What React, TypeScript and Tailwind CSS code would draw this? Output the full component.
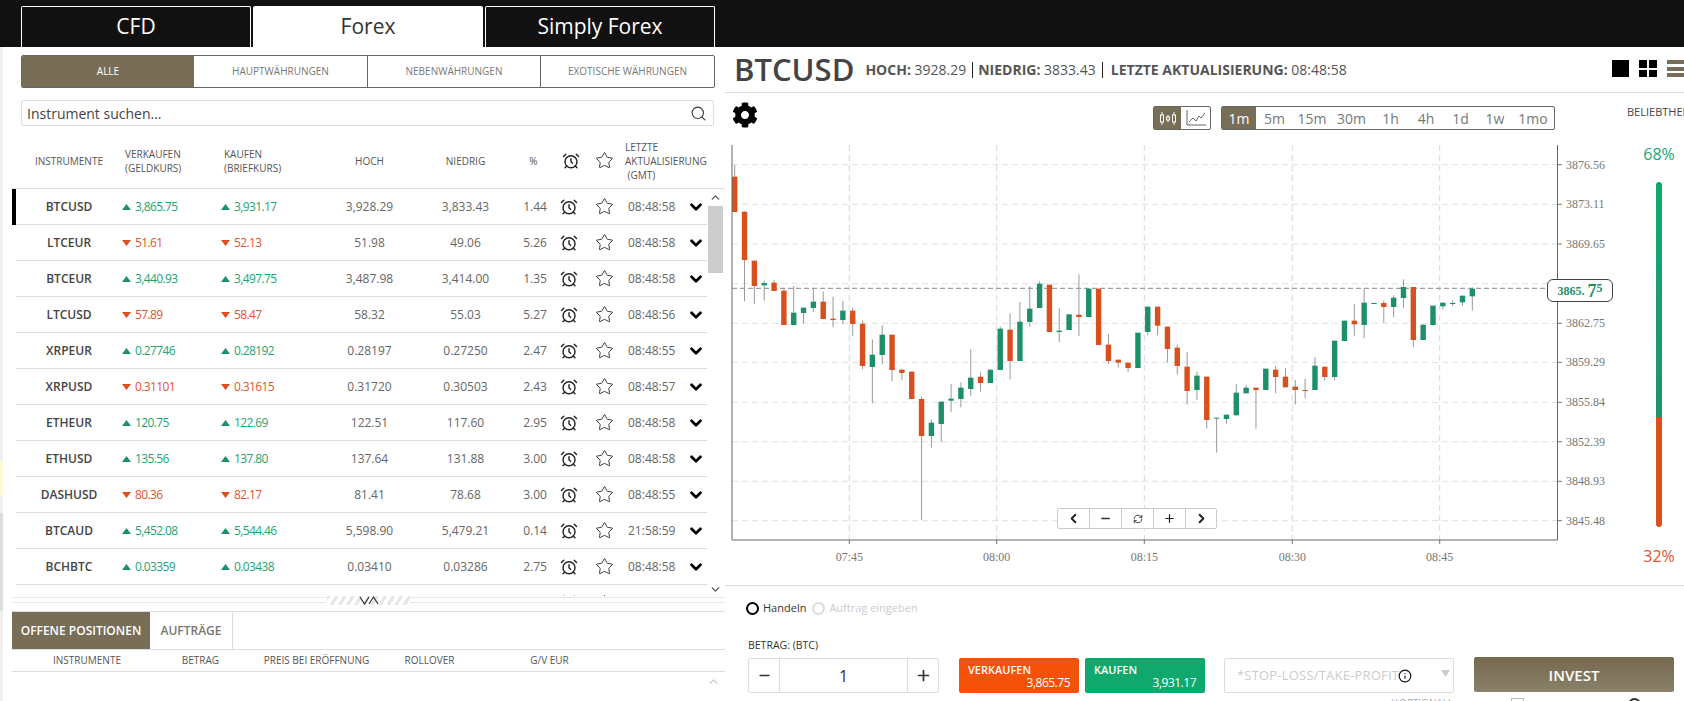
import { AlarmClock, ChevronDown, ChevronLeft, ChevronRight, ChevronUp, Info, Minus, Plus, RefreshCw, Search, Star } from "lucide-react";
import { FaCog } from "react-icons/fa";

type RowData = { sym: string; dir: "up" | "down"; sell: string; buy: string; high: string; low: string; pct: string; time: string };

const rows: RowData[] = [
  { sym: "BTCUSD", dir: "up", sell: "3,865.75", buy: "3,931.17", high: "3,928.29", low: "3,833.43", pct: "1.44", time: "08:48:58" },
  { sym: "LTCEUR", dir: "down", sell: "51.61", buy: "52.13", high: "51.98", low: "49.06", pct: "5.26", time: "08:48:58" },
  { sym: "BTCEUR", dir: "up", sell: "3,440.93", buy: "3,497.75", high: "3,487.98", low: "3,414.00", pct: "1.35", time: "08:48:58" },
  { sym: "LTCUSD", dir: "down", sell: "57.89", buy: "58.47", high: "58.32", low: "55.03", pct: "5.27", time: "08:48:56" },
  { sym: "XRPEUR", dir: "up", sell: "0.27746", buy: "0.28192", high: "0.28197", low: "0.27250", pct: "2.47", time: "08:48:55" },
  { sym: "XRPUSD", dir: "down", sell: "0.31101", buy: "0.31615", high: "0.31720", low: "0.30503", pct: "2.43", time: "08:48:57" },
  { sym: "ETHEUR", dir: "up", sell: "120.75", buy: "122.69", high: "122.51", low: "117.60", pct: "2.95", time: "08:48:58" },
  { sym: "ETHUSD", dir: "up", sell: "135.56", buy: "137.80", high: "137.64", low: "131.88", pct: "3.00", time: "08:48:58" },
  { sym: "DASHUSD", dir: "down", sell: "80.36", buy: "82.17", high: "81.41", low: "78.68", pct: "3.00", time: "08:48:55" },
  { sym: "BTCAUD", dir: "up", sell: "5,452.08", buy: "5,544.46", high: "5,598.90", low: "5,479.21", pct: "0.14", time: "21:58:59" },
  { sym: "BCHBTC", dir: "up", sell: "0.03359", buy: "0.03438", high: "0.03410", low: "0.03286", pct: "2.75", time: "08:48:58" },
];

// top, bottom, wick top, wick bottom, colour (values are 3x px from y=140)
const candles: [number, number, number, number, "r" | "g"][] = [
  [110, 216, 75, 216, "r"], [215, 360, 215, 484, "r"], [362, 438, 362, 492, "r"], [429, 436, 422, 482, "g"], [428, 453, 420, 453, "r"],
  [452, 555, 445, 555, "r"], [518, 555, 438, 555, "g"], [503, 519, 503, 550, "g"], [485, 504, 445, 515, "g"], [485, 537, 455, 537, "r"],
  [536, 540, 470, 562, "r"], [512, 540, 482, 552, "g"], [512, 552, 503, 588, "r"], [551, 678, 542, 688, "r"], [644, 681, 598, 790, "g"],
  [584, 645, 556, 672, "g"], [584, 690, 584, 724, "r"], [689, 699, 689, 720, "r"], [695, 777, 695, 777, "r"], [777, 888, 770, 1140, "r"],
  [848, 888, 838, 923, "g"], [785, 852, 785, 906, "g"], [776, 782, 732, 816, "g"], [743, 777, 727, 802, "g"], [713, 747, 628, 767, "g"],
  [710, 729, 697, 755, "r"], [689, 729, 689, 729, "g"], [566, 690, 560, 690, "g"], [569, 663, 520, 718, "r"], [545, 663, 486, 663, "g"],
  [506, 546, 438, 560, "g"], [431, 504, 424, 504, "g"], [434, 576, 434, 576, "r"], [572, 576, 504, 606, "g"], [523, 570, 523, 570, "g"],
  [524, 531, 403, 588, "r"], [446, 531, 446, 531, "g"], [446, 615, 446, 615, "r"], [614, 663, 582, 672, "r"], [659, 668, 659, 683, "r"],
  [668, 684, 668, 696, "r"], [578, 684, 578, 684, "g"], [500, 576, 500, 585, "g"], [500, 557, 500, 586, "r"], [560, 627, 560, 668, "r"],
  [623, 678, 614, 703, "r"], [680, 753, 636, 793, "r"], [707, 750, 695, 780, "g"], [710, 840, 710, 866, "r"], [833, 836, 833, 938, "g"],
  [824, 837, 824, 851, "g"], [758, 826, 732, 826, "g"], [743, 760, 735, 760, "g"], [743, 750, 743, 866, "r"], [686, 750, 686, 750, "g"],
  [689, 711, 678, 760, "r"], [710, 742, 685, 742, "r"], [740, 750, 720, 793, "r"], [750, 753, 717, 775, "r"], [677, 750, 652, 750, "g"],
  [680, 711, 680, 722, "r"], [602, 711, 602, 722, "g"], [542, 603, 542, 603, "g"], [542, 553, 492, 587, "r"], [488, 555, 445, 595, "g"],
  [489, 492, 489, 492, "g"], [489, 501, 482, 548, "r"], [473, 501, 466, 532, "g"], [441, 474, 418, 504, "g"], [441, 600, 441, 622, "r"],
  [554, 600, 554, 600, "g"], [497, 555, 497, 555, "g"], [488, 499, 488, 508, "g"], [489, 491, 482, 498, "g"], [467, 487, 467, 498, "g"],
  [446, 469, 442, 512, "g"],
];

const gridY = [164.7, 204.3, 244, 283.7, 323.3, 362.3, 402.3, 441.7, 481.3, 520.7];
const prices = ["3876.56", "3873.11", "3869.65", "", "3862.75", "3859.29", "3855.84", "3852.39", "3848.93", "3845.48"];
const gridX = [849.3, 996.7, 1144.3, 1292.3, 1439.7];
const times = ["07:45", "08:00", "08:15", "08:30", "08:45"];

const frames: [string, string][] = [
  ["1m", "w-[34px] bg-[#786e57] text-white"], ["5m", "w-[37px]"], ["15m", "w-[38px]"], ["30m", "w-[41px]"], ["1h", "w-[37px]"],
  ["4h", "w-[34px]"], ["1d", "w-[35px]"], ["1w", "w-[34px]"], ["1mo", "w-[42px]"],
];

const cols = "grid grid-cols-[106px_99px_99px_99px_93px_46px_22px_48px_44px_35px] items-center";

const Arrow = ({ dir }: { dir: string }) => (
  <svg width="9" height="6" viewBox="0 0 9 6" className="mr-[4px] shrink-0">
    {dir === "up" ? <polygon points="4.5,0 9,6 0,6" fill="#1d8f6a" /> : <polygon points="0,0 9,0 4.5,6" fill="#d9501e" />}
  </svg>
);

const Price = ({ dir, value }: { dir: string; value: string }) => (
  <div className={`flex items-center text-[12px] tracking-[-0.6px] ${dir === "up" ? "text-[#1ba672]" : "text-[#e2552a]"}`}>
    <Arrow dir={dir} />
    {value}
  </div>
);

const Row = ({ row, active }: { row: RowData; active?: boolean }) => (
  <div className={`border-l-4 ${active ? "border-black" : "border-transparent"}`}>
    <div className={`${cols} h-[36px] border-b border-[#ddd] text-[12px] text-[#666]`}>
      <div className="text-center font-semibold text-[#444]">{row.sym}</div>
      <Price dir={row.dir} value={row.sell} />
      <Price dir={row.dir} value={row.buy} />
      <div className="text-center">{row.high}</div>
      <div className="text-center">{row.low}</div>
      <div className="text-center">{row.pct}</div>
      <div className="flex justify-center"><AlarmClock size={18} strokeWidth={1.9} color="#222" /></div>
      <div className="flex justify-center"><Star size={19} strokeWidth={1.1} color="#222" /></div>
      <div className="text-center">{row.time}</div>
      <div className="flex justify-end pr-[2px]"><ChevronDown size={18} strokeWidth={3.6} color="#000" /></div>
    </div>
  </div>
);

const EmptyRow = () => (
  <div className="border-l-4 border-transparent">
    <div className={`${cols} h-[36px]`}>
      <div /><div /><div /><div /><div /><div />
      <div className="flex justify-center"><AlarmClock size={18} strokeWidth={1.9} color="#222" /></div>
      <div className="flex justify-center"><Star size={19} strokeWidth={1.1} color="#222" /></div>
    </div>
  </div>
);

const ChartSvg = () => (
  <svg width="895" height="445" viewBox="725 140 895 445" className="block">
    {gridY.map((y) => (
      <g key={y}>
        <line x1="732" x2="1558" y1={y} y2={y} stroke="#e0e0e0" strokeDasharray="6 4" />
        <line x1="1558" x2="1562" y1={y} y2={y} stroke="#777" />
      </g>
    ))}
    {gridX.map((x) => (
      <g key={x}>
        <line x1={x} x2={x} y1="145" y2="540" stroke="#d8d8d8" strokeDasharray="6 4" />
        <line x1={x} x2={x} y1="540" y2="544" stroke="#777" />
      </g>
    ))}
    <line x1="732" x2="1547" y1="288.3" y2="288.3" stroke="#888" strokeDasharray="5 3" />
    {candles.map(([top, bottom, wickTop, wickBottom, c], i) => {
      const x = 734.7 + i * 9.835;
      return (
        <g key={i}>
          <line x1={x} x2={x} y1={140 + wickTop / 3} y2={140 + wickBottom / 3} stroke="#999" />
          <rect x={x - 2.7} y={140 + top / 3} width="5.4" height={Math.max((bottom - top) / 3, 1)} fill={c === "r" ? "#d9501e" : "#1d8f6a"} />
        </g>
      );
    })}
    <path d="M732 145V540H1557.5V145" fill="none" stroke="#666" />
    {prices.map((p, i) => (
      <text key={i} x="1566" y={gridY[i] + 4} fontSize="12" fill="#777" fontFamily="'Liberation Serif', serif">{p}</text>
    ))}
    {times.map((t, i) => (
      <text key={t} x={gridX[i]} y="561" fontSize="12" fill="#777" textAnchor="middle" fontFamily="'Liberation Serif', serif">{t}</text>
    ))}
  </svg>
);

export default function App() {
  return (
    <div className="relative flex h-[701px] w-[1684px] flex-col overflow-hidden bg-white font-['Open_Sans',sans-serif] text-[#555]">
      {/* Page behind the panel, peeking out at the left edge */}
      <div className="absolute top-[461px] left-0 h-[34px] w-[3px] bg-[#fff9d6]" />
      <div className="absolute top-[513px] left-0 h-[98px] w-[3px] bg-[#ddd]" />

      {/* Top tabs */}
      <div className="flex h-[47px] shrink-0 items-end gap-[2px] bg-[#111] pl-[21px] text-[21px]">
        <div className="flex h-[41px] w-[230px] items-center justify-center rounded-t-[2px] border border-b-0 border-white text-white">CFD</div>
        <div className="flex h-[41px] w-[230px] items-center justify-center rounded-t-[2px] bg-white text-[#333]">Forex</div>
        <div className="flex h-[41px] w-[230px] items-center justify-center rounded-t-[2px] border border-b-0 border-white text-white">Simply Forex</div>
      </div>

      <div className="flex min-h-0 flex-1">
        {/* Left panel */}
        <div className="flex w-[725px] shrink-0 flex-col border-l-[3px] border-[#f0f0f0]">
          <div className="mt-[8px] ml-[18px] flex h-[33px] w-[694px] overflow-hidden rounded-[2px] border border-[#666] text-[10px] text-[#777]">
            <div className="flex w-[172px] items-center justify-center bg-[#786e57] text-white">ALLE</div>
            <div className="flex w-[174px] items-center justify-center border-r border-[#666]">HAUPTWÄHRUNGEN</div>
            <div className="flex w-[173px] items-center justify-center border-r border-[#666]">NEBENWÄHRUNGEN</div>
            <div className="flex flex-1 items-center justify-center">EXOTISCHE WÄHRUNGEN</div>
          </div>

          <div className="mt-[12px] ml-[18px] flex h-[26px] w-[693px] items-center justify-between rounded-[2px] border border-[#ddd] pr-[6px] pl-[5px] text-[14px] text-[#444]">
            <span>Instrument suchen...</span>
            <Search size={17} strokeWidth={1.5} color="#333" />
          </div>

          {/* Table head */}
          <div className="mt-[7px] ml-[9px] border-b border-[#ddd] pl-[4px]">
            <div className={`${cols} h-[55px] w-[691px] text-[10px] leading-[14px] text-[#555]`}>
              <div className="text-center">INSTRUMENTE</div>
              <div className="pl-[3px]">VERKAUFEN<br />(GELDKURS)</div>
              <div className="pl-[3px]">KAUFEN<br />(BRIEFKURS)</div>
              <div className="text-center">HOCH</div>
              <div className="text-center">NIEDRIG</div>
              <div className="pr-[3px] text-center">%</div>
              <div className="flex justify-center pl-[4px]"><AlarmClock size={18} strokeWidth={1.9} color="#222" /></div>
              <div className="flex justify-center"><Star size={19} strokeWidth={1.1} color="#222" /></div>
              <div className="col-span-2 -ml-[3px] whitespace-nowrap">LETZTE<br />AKTUALISIERUNG<br />&nbsp;(GMT)</div>
            </div>
          </div>

          {/* Rows */}
          <div className="ml-[9px] flex h-[407px] overflow-hidden">
            <div className="w-[695px] shrink-0">
              {rows.map((row, i) => <Row key={row.sym} row={row} active={i === 0} />)}
              <EmptyRow />
            </div>
            <div className="flex w-[17px] flex-col items-center">
              <ChevronUp size={13} strokeWidth={2.5} color="#555" className="mt-[2px] mb-[2px]" />
              <div className="h-[67px] w-[15px] bg-[#cdcdcd]" />
              <ChevronDown size={13} strokeWidth={2.5} color="#555" className="mt-auto" />
            </div>
          </div>

          {/* Splitter */}
          <div className="ml-[9px] flex h-[16px] items-start border-b border-[#ddd] bg-white">
            <div className="mt-[1px] h-[6px] flex-1 border-y border-[#e8e8e8]" />
            <div className="flex h-[9px] w-[83px] items-center justify-center bg-[repeating-linear-gradient(120deg,#e6e6e6_0,#e6e6e6_3px,#fff_3px,#fff_7px)]">
              <svg width="20" height="9" viewBox="0 0 20 9"><path d="M1 1L5.5 8L10 1M10 8L14.5 1L19 8" fill="none" stroke="#333" strokeWidth="1.2" /></svg>
            </div>
            <div className="mt-[1px] h-[6px] flex-1 border-y border-[#e8e8e8]" />
          </div>

          {/* Positions */}
          <div className="ml-[9px] flex h-[38px] shrink-0 border-b border-[#ddd] text-[12px] font-semibold">
            <div className="flex w-[138px] items-center justify-center bg-[#786e57] text-white">OFFENE POSITIONEN</div>
            <div className="flex w-[83px] items-center justify-center border-r border-[#ddd] text-[#777]">AUFTRÄGE</div>
          </div>
          <div className="ml-[9px] flex h-[22px] shrink-0 items-center border-b border-[#ddd] text-[10px] text-[#555]">
            <div className="w-[150px] text-center">INSTRUMENTE</div>
            <div className="w-[77px] text-center">BETRAG</div>
            <div className="w-[155px] text-center">PREIS BEI ERÖFFNUNG</div>
            <div className="w-[71px] text-center">ROLLOVER</div>
            <div className="w-[169px] text-center">G/V EUR</div>
          </div>
          <div className="ml-[9px] flex justify-end pt-[3px] pr-[5px]">
            <ChevronUp size={13} strokeWidth={2.5} color="#ccc" />
          </div>
        </div>

        {/* Right panel */}
        <div className="flex min-w-0 flex-1 flex-col">
          <div className="flex h-[46px] shrink-0 items-center border-b border-[#ddd] pl-[9px] text-[14px] text-[#555]">
            <span className="mr-[11px] text-[31px] leading-none font-semibold text-[#444]">BTCUSD</span>
            <span className="pr-[6px]"><b className="font-bold">HOCH:</b> 3928.29</span>
            <span className="border-l border-[#222] pr-[6px] pl-[5px] leading-[16px]"><b className="font-bold">NIEDRIG:</b> 3833.43</span>
            <span className="border-l border-[#222] pl-[8px] leading-[16px]"><b className="font-bold">LETZTE AKTUALISIERUNG:</b> 08:48:58</span>
            <div className="ml-auto -mt-[2px] flex items-center gap-[10px]">
              <div className="h-[17px] w-[17px] bg-black" />
              <div className="grid h-[17px] w-[18px] grid-cols-2 gap-[2px]">
                <div className="bg-black" /><div className="bg-black" /><div className="bg-black" /><div className="bg-black" />
              </div>
              <div className="flex h-[17px] w-[17px] flex-col justify-between">
                <div className="h-[4px] bg-[#786e57]" /><div className="h-[4px] bg-[#786e57]" /><div className="h-[4px] bg-[#786e57]" />
              </div>
            </div>
          </div>

          <div className="flex h-[493px] shrink-0 border-b border-[#ddd]">
            <div className="w-[895px] shrink-0">
              {/* Chart toolbar */}
              <div className="flex h-[47px] items-start pt-[13px] pr-[65px] pl-[7px]">
                <FaCog size={26} color="#000" className="-mt-[4px]" />
                <div className="ml-auto flex h-[24px] w-[58px] overflow-hidden rounded-[2px] border border-[#666]">
                  <div className="flex w-[27px] items-center justify-center bg-[#786e57]">
                    <svg width="18" height="13" viewBox="0 0 18 13" fill="none" stroke="#fff">
                      <path d="M3 0V13M9 3V10M15 0V13" />
                      <rect x="1.5" y="3" width="3" height="7" fill="#786e57" />
                      <rect x="7.5" y="5" width="3" height="3" fill="#786e57" />
                      <rect x="13.5" y="3" width="3" height="7" fill="#786e57" />
                    </svg>
                  </div>
                  <div className="flex flex-1 items-center justify-center">
                    <svg width="20" height="16" viewBox="0 0 20 16" fill="none" stroke="#666">
                      <path d="M1 0V15H20" />
                      <path d="M3 12L7 8L10 11L13 6L15 8L19 3" />
                    </svg>
                  </div>
                </div>
                <div className="ml-[10px] flex h-[24px] overflow-hidden rounded-[2px] border border-[#666] text-[14px] text-[#777]">
                  {frames.map(([label, cls]) => (
                    <div key={label} className={`flex items-center justify-center ${cls}`}>{label}</div>
                  ))}
                </div>
              </div>

              {/* Chart */}
              <div className="relative h-[445px]">
                <ChartSvg />
                <div className="absolute top-[139px] left-[822px] flex h-[23px] w-[66px] items-center justify-center rounded-[6px] border border-[#444] bg-white font-['Liberation_Serif',serif] font-bold text-[#1d8f6a]">
                  <span className="text-[12px]">3865.</span>
                  <span className="ml-[3px] text-[18px] leading-none">7</span>
                  <span className="-mt-[5px] text-[12px] leading-none">5</span>
                </div>
                <div className="absolute top-[368px] left-[332px] flex h-[21px] w-[160px] rounded-[2px] border border-[#ccc] bg-white">
                  <div className="flex w-[32px] items-center justify-center border-r border-[#ccc]"><ChevronLeft size={15} strokeWidth={3} color="#222" /></div>
                  <div className="flex w-[32px] items-center justify-center border-r border-[#ccc]"><Minus size={13} strokeWidth={2.5} color="#333" /></div>
                  <div className="flex w-[32px] items-center justify-center border-r border-[#ccc]"><RefreshCw size={10} strokeWidth={2.2} color="#333" /></div>
                  <div className="flex w-[32px] items-center justify-center border-r border-[#ccc]"><Plus size={13} strokeWidth={2.2} color="#222" /></div>
                  <div className="flex flex-1 items-center justify-center"><ChevronRight size={15} strokeWidth={3} color="#222" /></div>
                </div>
              </div>
            </div>

            {/* Popularity */}
            <div className="min-w-0 flex-1 overflow-hidden pt-[12px] pl-[7px]">
              <div className="text-[11px] leading-[14px] whitespace-nowrap text-[#444]">BELIEBTHEIT</div>
              <div className="mt-[24px] ml-[12px] flex w-[40px] flex-col items-center">
                <div className="h-[22px] text-[16px] leading-[22px] text-[#1ba672]">68%</div>
                <div className="mt-[17px] h-[235px] w-[6px] rounded-t-[3px] bg-gradient-to-b from-[#10a96d] to-[#23906f]" />
                <div className="h-[110px] w-[6px] rounded-b-[3px] bg-[#d9501e]" />
                <div className="mt-[18px] h-[22px] text-[16px] leading-[22px] text-[#e2552a]">32%</div>
              </div>
            </div>
          </div>

          {/* Order form */}
          <div className="pt-[15px] pl-[21px]">
            <div className="flex h-[14px] items-center text-[11px]">
              <div className="h-[13px] w-[13px] rounded-full border-2 border-black" />
              <span className="ml-[4px] text-[#333]">Handeln</span>
              <div className="ml-[6px] h-[13px] w-[13px] rounded-full border-2 border-[#ddd]" />
              <span className="ml-[4px] text-[#ccc]">Auftrag eingeben</span>
            </div>
            <div className="mt-[23px] ml-[2px] h-[14px] text-[10.5px] leading-[14px] text-[#333]">BETRAG: (BTC)</div>
            <div className="mt-[6px] ml-[2px] flex items-start">
              <div className="flex h-[35px] w-[191px] rounded-[2px] border border-[#ddd] text-[#333]">
                <div className="flex w-[31px] items-center justify-center border-r border-[#ddd]"><Minus size={15} strokeWidth={2.4} /></div>
                <div className="flex flex-1 items-center justify-center text-[16px]">1</div>
                <div className="flex w-[31px] items-center justify-center border-l border-[#ddd]"><Plus size={17} strokeWidth={2.4} /></div>
              </div>
              <div className="ml-[20px] flex h-[35px] w-[120px] flex-col rounded-[2px] bg-[#f4510b] px-[9px] pt-[5px] text-[11px] leading-[13px] font-semibold text-white">
                <span>VERKAUFEN</span>
                <span className="text-right text-[12px] font-normal tracking-[-0.5px]">3,865.75</span>
              </div>
              <div className="ml-[6px] flex h-[35px] w-[120px] flex-col rounded-[2px] bg-[#10a96d] px-[9px] pt-[5px] text-[11px] leading-[13px] font-semibold text-white">
                <span>KAUFEN</span>
                <span className="text-right text-[12px] font-normal tracking-[-0.5px]">3,931.17</span>
              </div>
              <div className="ml-[19px] w-[230px]">
                <div className="flex h-[35px] items-center rounded-[2px] border border-[#ddd] pl-[12px] text-[13px] tracking-[0.2px] text-[#ccc]">
                  <span className="whitespace-nowrap">*STOP-LOSS/TAKE-PROFIT</span>
                  <Info size={14} strokeWidth={2} color="#111" className="-ml-[1px] shrink-0" />
                  <svg width="9" height="7" viewBox="0 0 9 7" className="ml-[29px] -mt-[4px] shrink-0"><polygon points="0,0 9,0 4.5,7" fill="#ccc" /></svg>
                </div>
                <div className="mt-[3px] pr-[3px] text-right text-[10px] leading-[14px] text-[#aaa]">(*OPTIONAL)</div>
              </div>
              <div className="ml-[20px] -mt-px w-[200px]">
                <div className="flex h-[35px] items-center justify-center rounded-[2px] bg-gradient-to-b from-[#75694f] to-[#8a8069] pt-[1px] text-[15px] font-semibold text-white">INVEST</div>
                <div className="mt-[6px] flex items-start">
                  <div className="ml-[37px] h-[13px] w-[13px] border border-[#bbb]" />
                  <div className="ml-[104px] h-[13px] w-[13px] rounded-full border-2 border-[#333]" />
                </div>
              </div>
            </div>
          </div>
        </div>
      </div>
    </div>
  );
}
